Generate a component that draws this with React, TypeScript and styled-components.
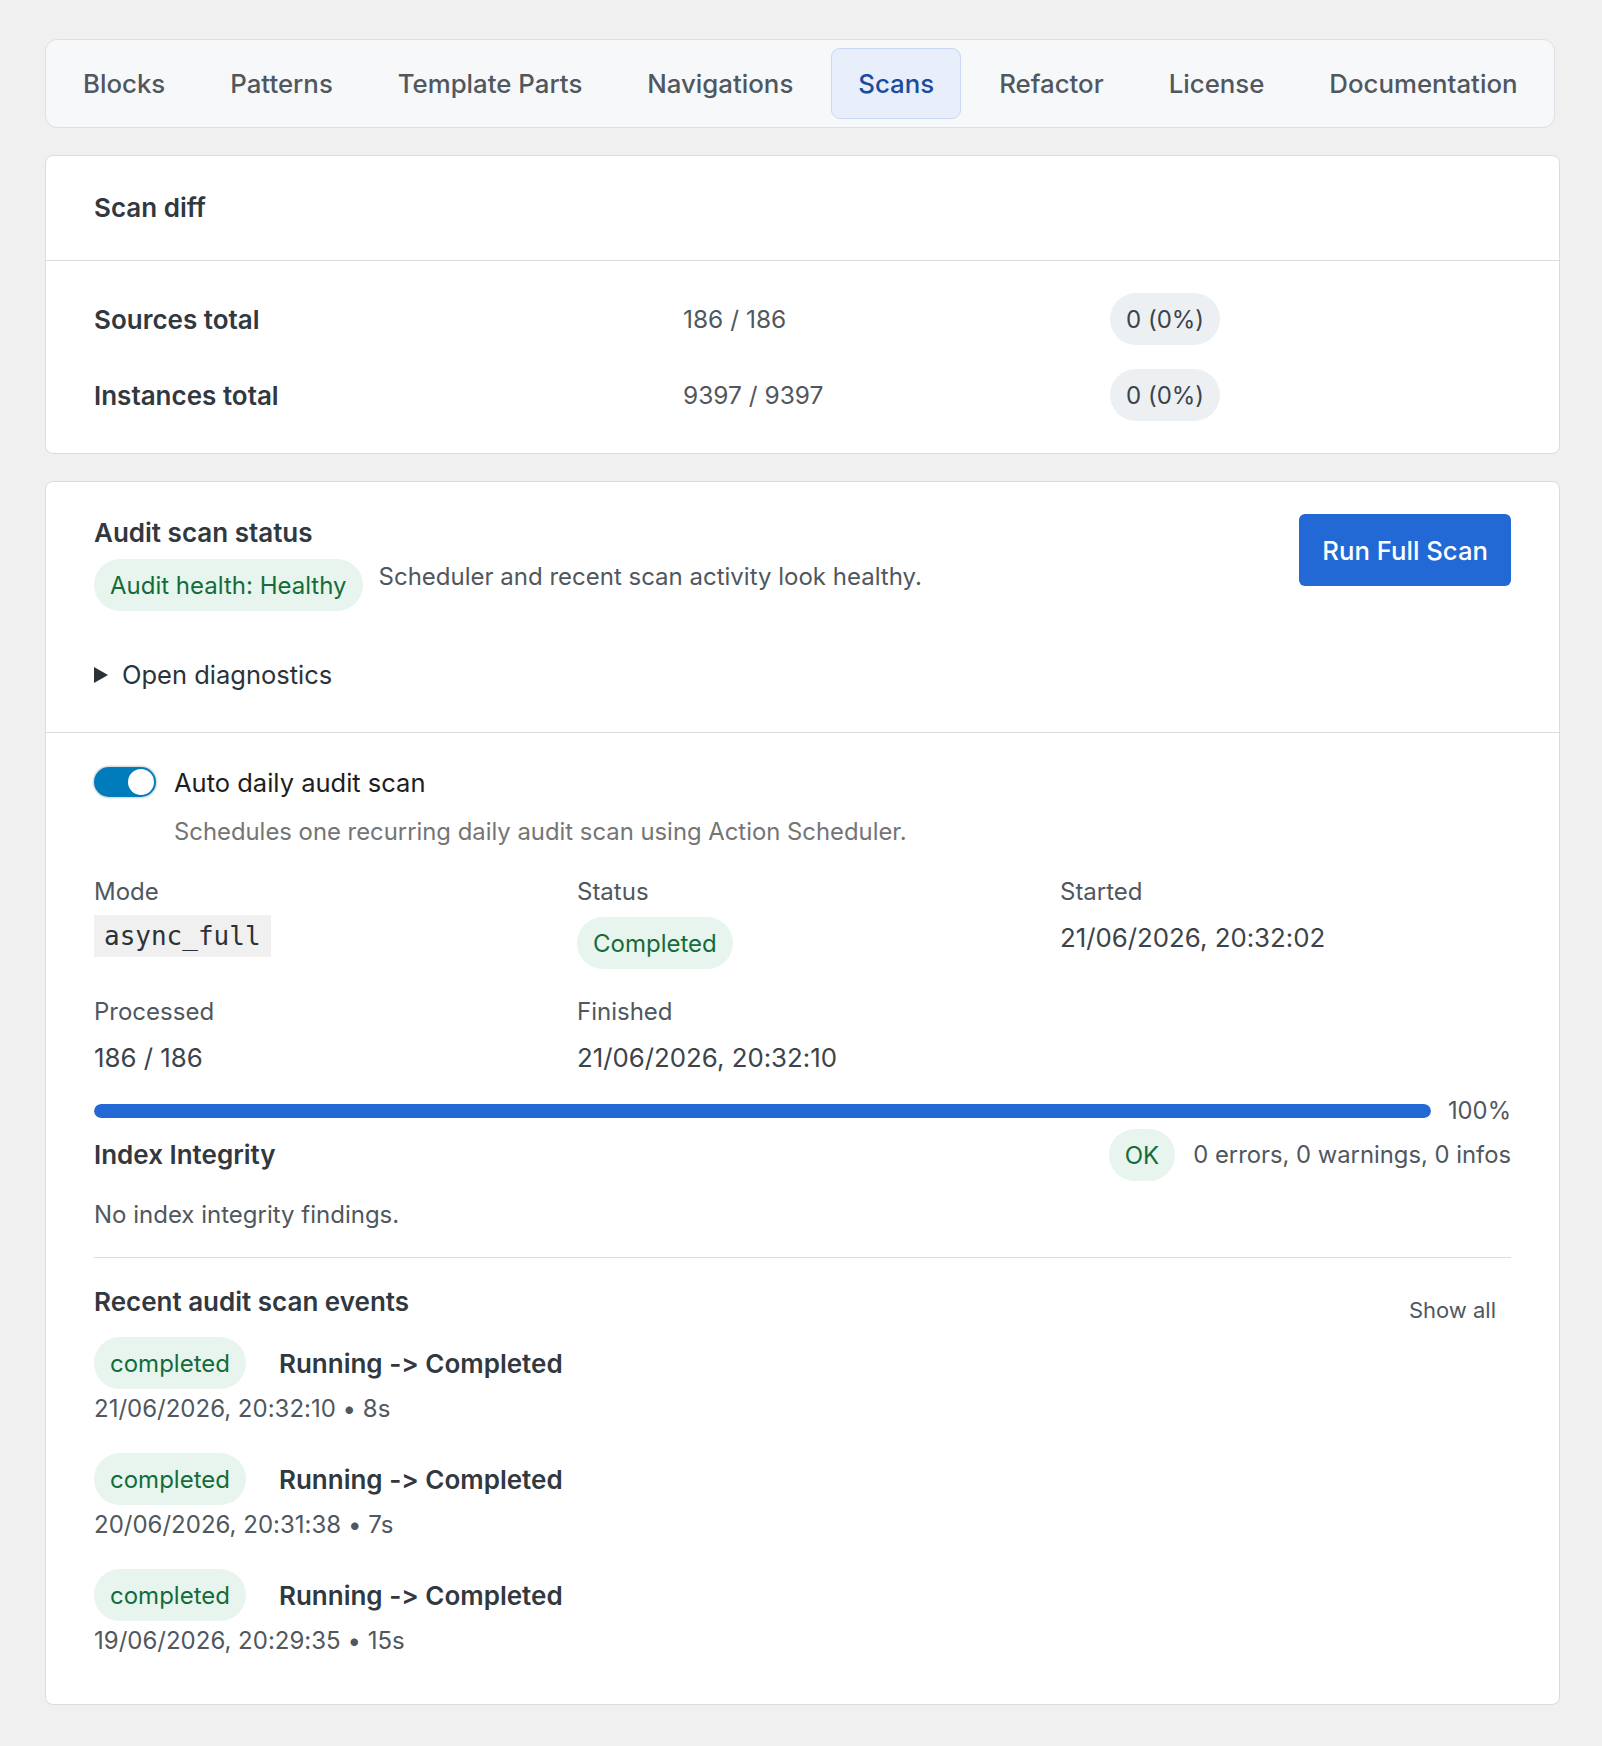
import React from "react";
import styled, { createGlobalStyle } from "styled-components";

const GlobalStyle = createGlobalStyle`
  html, body { margin: 0; padding: 0; }
  body {
    background: #f0f0f1;
    font-family: Inter, "Noto Sans", "Liberation Sans", sans-serif;
    font-feature-settings: "calt" 0, "liga" 0;
    color: #2c3338;
  }
  * { box-sizing: border-box; }
`;

const Page = styled.div`
  padding: 39px 42px 44px 45px;
  display: flex;
  flex-direction: column;
  align-items: flex-start;
  gap: 27px;
`;

const TabBar = styled.nav`
  display: inline-flex;
  align-items: center;
  gap: 11px;
  padding: 8px 10px;
  background: #f7f8fa;
  border: 1px solid #dcdfe4;
  border-radius: 12px;
`;

const Tab = styled.button<{ $active?: boolean }>`
  height: 71px;
  padding: 0 26px;
  border-radius: 9px;
  border: 1.5px solid ${(p) => (p.$active ? "#c8d8f4" : "transparent")};
  background: ${(p) => (p.$active ? "#e8eefa" : "transparent")};
  color: ${(p) => (p.$active ? "#1a4c9e" : "#50575e")};
  font-family: inherit;
  font-feature-settings: inherit;
  font-size: 25.8px;
  font-weight: 500;
  cursor: pointer;
`;

const Card = styled.section`
  align-self: stretch;
  background: #ffffff;
  border: 1px solid #dcdcde;
  border-radius: 8px;
`;

const CardHeader = styled.header`
  padding: 34px 48px;
  border-bottom: 1px solid #dcdcde;
`;

const Title = styled.h2`
  margin: 0;
  font-size: 26px;
  line-height: 36px;
  font-weight: 600;
  color: #313840;
`;

const DiffBody = styled.div`
  padding: 32px 48px;
  display: flex;
  flex-direction: column;
  gap: 24px;
`;

const DiffRow = styled.div`
  display: grid;
  grid-template-columns: 589px 427px auto;
  align-items: center;
  height: 52px;
`;

const DiffLabel = styled.span`
  font-size: 26px;
  font-weight: 600;
  color: #313840;
`;

const DiffValue = styled.span`
  font-size: 24.5px;
  color: #50575e;
`;

const Pill = styled.span<{ $tone?: "green" | "neutral" }>`
  display: inline-flex;
  align-items: center;
  justify-self: start;
  align-self: flex-start;
  height: 52px;
  padding: 0 16px;
  border-radius: 26px;
  font-size: 24px;
  white-space: nowrap;
  background: ${(p) => (p.$tone === "green" ? "#e8f5ee" : "#edf0f3")};
  color: ${(p) => (p.$tone === "green" ? "#146c3a" : "#3c434a")};
`;

const Section = styled.div<{ $divider?: boolean }>`
  padding: ${(p) => (p.$divider ? "31px 48px 45px" : "33px 48px 39px")};
  border-top: ${(p) => (p.$divider ? "1px solid #dcdcde" : "none")};
`;

const StatusHeader = styled.div`
  display: flex;
  justify-content: space-between;
  align-items: flex-start;
`;

const StatusMain = styled.div`
  display: flex;
  flex-direction: column;
  gap: 8px;
`;

const HealthRow = styled.div`
  display: flex;
  align-items: flex-start;
  gap: 16px;
`;

const Description = styled.span`
  font-size: 24px;
  line-height: 36px;
  color: #50575e;
`;

const PrimaryButton = styled.button`
  height: 72px;
  margin-top: -1px;
  padding: 0 23px;
  border: none;
  border-radius: 6px;
  background: #2369d6;
  color: #ffffff;
  font-family: inherit;
  font-size: 25.7px;
  font-weight: 500;
  cursor: pointer;
`;

const Details = styled.details`
  margin-top: 46px;
`;

const Summary = styled.summary`
  display: flex;
  align-items: center;
  gap: 14px;
  list-style: none;
  font-size: 25.5px;
  line-height: 36px;
  color: #2c3338;
  cursor: pointer;
  &::-webkit-details-marker { display: none; }
`;

const ToggleRow = styled.label`
  display: flex;
  align-items: center;
  gap: 18px;
  height: 36px;
`;

const Toggle = styled.span<{ $on?: boolean }>`
  position: relative;
  display: inline-block;
  width: 62px;
  height: 30px;
  border-radius: 15px;
  background: ${(p) => (p.$on ? "#007cba" : "#ffffff")};
  box-shadow: 0 0 0 1.5px #dcdfe4;
`;

const Knob = styled.span<{ $on?: boolean }>`
  position: absolute;
  top: 2px;
  left: ${(p) => (p.$on ? "34px" : "2px")};
  width: 26px;
  height: 26px;
  border-radius: 50%;
  background: #ffffff;
`;

const ToggleLabel = styled.span`
  font-size: 25.5px;
  color: #1e1e1e;
`;

const HelpText = styled.p`
  margin: 15px 0 0 80px;
  font-size: 23.85px;
  line-height: 34px;
  color: #757575;
`;

const InfoGrid = styled.div`
  margin-top: 26px;
  display: grid;
  grid-template-columns: repeat(3, 1fr);
  column-gap: 32px;
  row-gap: 26px;
`;

const InfoCell = styled.div`
  display: flex;
  flex-direction: column;
  align-items: flex-start;
  gap: 8px;
`;

const InfoLabel = styled.span`
  font-size: 24px;
  line-height: 34px;
  color: #50575e;
`;

const InfoValue = styled.span`
  font-size: 25.8px;
  line-height: 42px;
  color: #3c434a;
`;

const Code = styled.code`
  display: inline-flex;
  align-items: center;
  height: 42px;
  padding: 0 10px;
  margin-top: -2px;
  background: #f0f0f1;
  font-family: "DejaVu Sans Mono", "Liberation Mono", monospace;
  font-size: 26px;
  color: #2c3338;
`;

const ProgressRow = styled.div`
  margin-top: 14px;
  display: flex;
  align-items: center;
  gap: 17px;
  height: 36px;
`;

const ProgressTrack = styled.div`
  flex: 1;
  height: 14px;
  border-radius: 7px;
  background: #dcdcde;
  overflow: hidden;
`;

const ProgressFill = styled.div`
  height: 100%;
  border-radius: 7px;
  background: #2369d6;
`;

const MutedText = styled.span`
  font-size: 23.8px;
  line-height: 36px;
  color: #50575e;
`;

const IntegrityRow = styled.div`
  display: flex;
  justify-content: space-between;
  align-items: center;
  height: 52px;
`;

const SubTitle = styled.h3`
  margin: 0;
  font-size: 26px;
  line-height: 36px;
  font-weight: 600;
  color: #313840;
`;

const IntegritySummary = styled.div`
  display: flex;
  align-items: center;
  gap: 18px;
`;

const Paragraph = styled.p`
  margin: 16px 0 0;
  font-size: 24px;
  line-height: 36px;
  color: #50575e;
`;

const Divider = styled.hr`
  margin: 24px 0 26px;
  border: none;
  border-top: 1px solid #dcdcde;
`;

const EventsHeader = styled.div`
  display: flex;
  justify-content: space-between;
  align-items: flex-start;
`;

const GhostButton = styled.button`
  height: 52px;
  padding: 0 15px;
  border: none;
  background: transparent;
  color: #50575e;
  font-family: inherit;
  font-size: 22px;
  cursor: pointer;
`;

const EventList = styled.ul`
  list-style: none;
  margin: 1px 0 0;
  padding: 0;
  display: flex;
  flex-direction: column;
  gap: 26px;
`;

const EventItem = styled.li`
  display: flex;
  flex-direction: column;
`;

const EventTop = styled.div`
  display: flex;
  align-items: center;
  gap: 33px;
`;

const EventTitle = styled.span`
  font-size: 26px;
  font-weight: 600;
  color: #313840;
`;

const EventMeta = styled.span`
  margin-top: 2px;
  font-size: 24px;
  line-height: 36px;
  color: #50575e;
`;

const tabs = [
  "Blocks",
  "Patterns",
  "Template Parts",
  "Navigations",
  "Scans",
  "Refactor",
  "License",
  "Documentation",
];

const diffRows = [
  { label: "Sources total", value: "186 / 186", delta: "0 (0%)" },
  { label: "Instances total", value: "9397 / 9397", delta: "0 (0%)" },
];

const events = [
  { when: "21/06/2026, 20:32:10", dur: "8s" },
  { when: "20/06/2026, 20:31:38", dur: "7s" },
  { when: "19/06/2026, 20:29:35", dur: "15s" },
];

const Triangle = () => (
  <svg width="14" height="16" viewBox="0 0 14 16" aria-hidden="true">
    <polygon points="0,0 14,8 0,16" fill="#2c3338" />
  </svg>
);

export default function App() {
  const progress = 100;
  return (
    <>
      <GlobalStyle />
      <Page>
        <TabBar>
          {tabs.map((t) => (
            <Tab key={t} $active={t === "Scans"}>
              {t}
            </Tab>
          ))}
        </TabBar>

        <Card>
          <CardHeader>
            <Title>Scan diff</Title>
          </CardHeader>
          <DiffBody>
            {diffRows.map((r) => (
              <DiffRow key={r.label}>
                <DiffLabel>{r.label}</DiffLabel>
                <DiffValue>{r.value}</DiffValue>
                <Pill $tone="neutral" style={{ alignSelf: "center" }}>
                  {r.delta}
                </Pill>
              </DiffRow>
            ))}
          </DiffBody>
        </Card>

        <Card>
          <Section>
            <StatusHeader>
              <StatusMain>
                <Title>Audit scan status</Title>
                <HealthRow>
                  <Pill $tone="green">Audit health: Healthy</Pill>
                  <Description>
                    Scheduler and recent scan activity look healthy.
                  </Description>
                </HealthRow>
              </StatusMain>
              <PrimaryButton>Run Full Scan</PrimaryButton>
            </StatusHeader>
            <Details>
              <Summary>
                <Triangle />
                Open diagnostics
              </Summary>
            </Details>
          </Section>

          <Section $divider>
            <ToggleRow>
              <Toggle $on>
                <Knob $on />
              </Toggle>
              <ToggleLabel>Auto daily audit scan</ToggleLabel>
            </ToggleRow>
            <HelpText>
              Schedules one recurring daily audit scan using Action Scheduler.
            </HelpText>

            <InfoGrid>
              <InfoCell>
                <InfoLabel>Mode</InfoLabel>
                <Code>async_full</Code>
              </InfoCell>
              <InfoCell>
                <InfoLabel>Status</InfoLabel>
                <Pill $tone="green">Completed</Pill>
              </InfoCell>
              <InfoCell>
                <InfoLabel>Started</InfoLabel>
                <InfoValue>21/06/2026, 20:32:02</InfoValue>
              </InfoCell>
              <InfoCell>
                <InfoLabel>Processed</InfoLabel>
                <InfoValue>186 / 186</InfoValue>
              </InfoCell>
              <InfoCell>
                <InfoLabel>Finished</InfoLabel>
                <InfoValue>21/06/2026, 20:32:10</InfoValue>
              </InfoCell>
            </InfoGrid>

            <ProgressRow>
              <ProgressTrack>
                <ProgressFill style={{ width: `${progress}%` }} />
              </ProgressTrack>
              <MutedText>{progress}%</MutedText>
            </ProgressRow>

            <IntegrityRow>
              <SubTitle>Index Integrity</SubTitle>
              <IntegritySummary>
                <Pill $tone="green" style={{ alignSelf: "center" }}>
                  OK
                </Pill>
                <MutedText>0 errors, 0 warnings, 0 infos</MutedText>
              </IntegritySummary>
            </IntegrityRow>
            <Paragraph>No index integrity findings.</Paragraph>

            <Divider />

            <EventsHeader>
              <SubTitle>Recent audit scan events</SubTitle>
              <GhostButton>Show all</GhostButton>
            </EventsHeader>
            <EventList>
              {events.map((e) => (
                <EventItem key={e.when}>
                  <EventTop>
                    <Pill $tone="green">completed</Pill>
                    <EventTitle>Running -&gt; Completed</EventTitle>
                  </EventTop>
                  <EventMeta>
                    {e.when} • {e.dur}
                  </EventMeta>
                </EventItem>
              ))}
            </EventList>
          </Section>
        </Card>
      </Page>
    </>
  );
}
